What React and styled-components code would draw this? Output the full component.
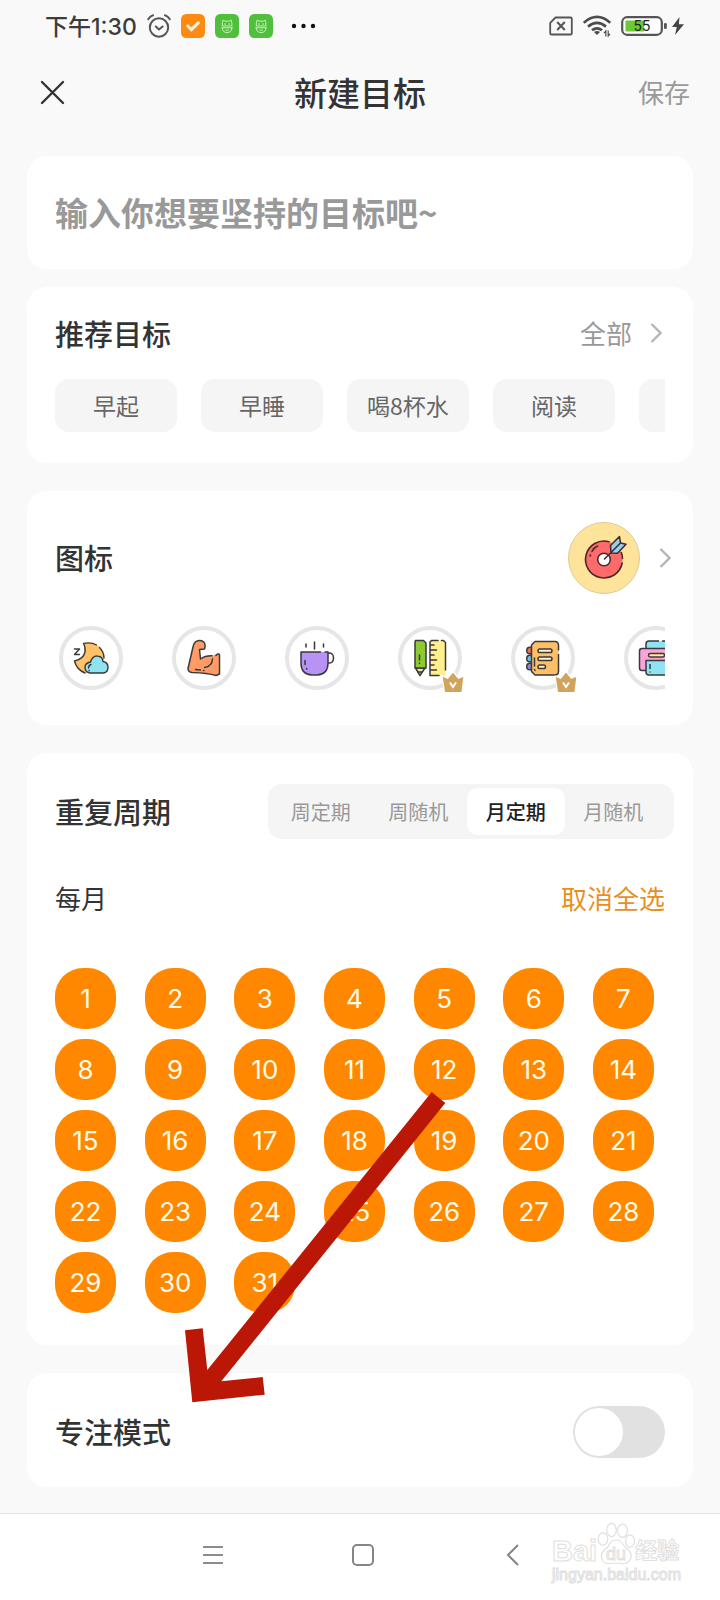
import React, { useState } from 'react'
import styled, { createGlobalStyle } from 'styled-components'

const GlobalStyle = createGlobalStyle`
  * {
    box-sizing: border-box;
  }

  body {
    margin: 0;
    background: #f9f9f9;
    color: #333;
    font-family: "Noto Sans CJK SC", "Noto Sans", sans-serif;
  }

  button, input {
    font-family: inherit;
    margin: 0;
  }

  button {
    padding: 0;
    border: 0;
    background: none;
    color: inherit;
    cursor: pointer;
  }

  svg {
    display: block;
    flex: none;
  }
`

const Page = styled.div`
  min-height: 100vh;
  display: flex;
  flex-direction: column;
`

const StatusBar = styled.div`
  height: 52px;
  padding: 0 36px 0 45px;
  display: flex;
  align-items: center;
  justify-content: space-between;
`

const StatusGroup = styled.div`
  display: flex;
  align-items: center;
  gap: ${(props) => props.$gap || 10}px;
`

const Clock = styled.span`
  font-size: 23px;
  line-height: 28px;
  font-weight: 500;
  color: #3c3c3c;
`

const ClockDigits = styled.span`
  font-family: Inter, sans-serif;
`

const Header = styled.header`
  height: 82px;
  padding: 0 30px 2px;
  display: grid;
  grid-template-columns: 1fr auto 1fr;
  align-items: center;
`

const CloseButton = styled.button`
  justify-self: start;
  padding: 10px;
`

const PageTitle = styled.h1`
  margin: 0;
  font-size: 33px;
  line-height: 48px;
  font-weight: 500;
`

const SaveButton = styled.button`
  justify-self: end;
  font-size: 26px;
  line-height: 40px;
  color: #999;
`

const Main = styled.main`
  flex: 1;
  padding: 22px 27px 26px;
  display: flex;
  flex-direction: column;
  gap: 28px;
`

const GoalGroup = styled.div`
  display: flex;
  flex-direction: column;
  gap: 18px;
`

const Card = styled.section`
  position: relative;
  padding: ${(props) => props.$pad || '31px 28px'};
  border-radius: 20px;
  background: #fff;
`

const GoalInput = styled.input`
  display: block;
  width: 100%;
  height: 113px;
  padding: 0 28px 2px;
  border: 0;
  border-radius: 20px;
  outline: 0;
  background: #fff;
  color: #333;
  font-size: 33px;
  font-weight: 700;

  &::placeholder {
    color: #999;
    opacity: 1;
  }
`

const Row = styled.div`
  height: ${(props) => props.$height}px;
  display: flex;
  align-items: center;
  justify-content: space-between;
`

const CardTitle = styled.h2`
  margin: 0;
  padding-bottom: 2px;
  font-size: 29px;
  line-height: 44px;
  font-weight: 500;
`

const MoreButton = styled.button`
  display: flex;
  align-items: center;
  gap: 18px;
  padding: 0 3px 2px 0;
  font-size: 26px;
  line-height: 40px;
  color: #999;
`

const Scroller = styled.div`
  display: flex;
  gap: ${(props) => props.$gap}px;
  overflow-x: auto;
  scrollbar-width: none;
`

const ChipList = styled(Scroller)`
  margin-top: 22px;
`

const IconList = styled(Scroller)`
  margin-top: 32px;
  padding: 0 0 4px 4px;
`

const Chip = styled.button`
  flex: none;
  width: 122px;
  height: 53px;
  padding-bottom: 2px;
  border-radius: 14px;
  background: #f5f5f5;
  color: #666;
  font-size: 23px;
`

const IconPicker = styled.button`
  display: flex;
  align-items: center;
  gap: 19px;
  margin-right: -6px;
`

const Selected = styled.span`
  width: 72px;
  height: 72px;
  border: 1px solid #dccb92;
  border-radius: 50%;
  background: #fee49a;
  display: grid;
  place-items: center;
`

const IconButton = styled.button`
  position: relative;
  flex: none;
  width: 64px;
  height: 64px;
  border: 4px solid #e6e6e6;
  border-radius: 50%;
  display: grid;
  place-items: center;
`

const Badge = styled.span`
  position: absolute;
  right: -7px;
  bottom: -8px;
`

const Segments = styled.div`
  width: 406px;
  height: 55px;
  margin-right: -9px;
  padding: 4px 12px 4px 4px;
  display: flex;
  border-radius: 14px;
  background: #f5f5f5;
`

const Segment = styled.button`
  flex: 1;
  border-radius: 11px;
  font-size: 20px;
  font-weight: ${(props) => (props.$active ? 500 : 400)};
  color: ${(props) => (props.$active ? '#222' : '#999')};
  background: ${(props) => (props.$active ? '#fff' : 'transparent')};
`

const MonthRow = styled(Row)`
  margin: 40px 0 49px;
  padding-bottom: 2px;
  font-size: 26px;
  line-height: 38px;
`

const ClearButton = styled.button`
  font-size: 26px;
  line-height: 38px;
  color: #e8901e;
`

const DayGrid = styled.div`
  padding-right: 11px;
  display: grid;
  grid-template-columns: repeat(7, 61px);
  justify-content: space-between;
  row-gap: 10px;
`

const Day = styled.button`
  height: 61px;
  border-radius: 28px;
  background: ${(props) => (props.$on ? '#ff8800' : '#f5f5f5')};
  color: ${(props) => (props.$on ? '#fffbe9' : '#666')};
  font-family: Inter, sans-serif;
  font-size: 26px;
`

const Arrow = styled.svg`
  position: absolute;
  left: 157px;
  top: 338px;
  z-index: 2;
  pointer-events: none;
`

const FocusLabel = styled.label`
  padding-bottom: 2px;
  font-size: 29px;
  line-height: 44px;
  font-weight: 500;
`

const Switch = styled.input`
  appearance: none;
  position: relative;
  width: 92px;
  height: 52px;
  border-radius: 26px;
  background: #e1e1e1;
  cursor: pointer;

  &::after {
    content: "";
    position: absolute;
    left: 2px;
    top: 2px;
    width: 48px;
    height: 48px;
    border-radius: 50%;
    background: #fff;
  }

  &:checked {
    background: #ff8800;
  }

  &:checked::after {
    left: 42px;
  }
`

const NavBar = styled.nav`
  position: relative;
  height: 87px;
  padding: 0 0 5px 6px;
  border-top: 1px solid #e3e3e3;
  background: #fff;
  display: flex;
  align-items: center;
  justify-content: center;
  gap: 128px;
`

const Watermark = styled.div`
  position: absolute;
  right: 38px;
  top: 7px;
  width: 130px;
  color: #fff;
  font-family: "Liberation Sans", "Noto Sans CJK SC", sans-serif;
  -webkit-text-stroke: 1px #e0e0e0;
`

const Brand = styled.div`
  display: flex;
  align-items: flex-end;
  height: 44px;
  font-size: 29px;
  line-height: 28px;
  font-weight: 700;
`

const BrandCn = styled.span`
  font-size: 22px;
`

const Site = styled.div`
  font-size: 16px;
  line-height: 20px;
`

const Chevron = () => (
  <svg width="12" height="20" viewBox="0 0 12 20" fill="none" stroke="#b5b5b5" strokeWidth="2.4">
    <path d="M1.500 1 10.500 10 1.500 19" />
  </svg>
)

const AlarmIcon = () => (
  <svg width="24" height="24" viewBox="0 0 24 24" fill="none" stroke="#555" strokeWidth="2" strokeLinecap="round">
    <circle cx="12" cy="13.5" r="9.2" />
    <path d="M8.8 12.5 12 15.5l3.6-3M1.2 5.2Q3 2.4 6 1.3M22.8 5.2Q21 2.4 18 1.3" />
  </svg>
)

const CheckApp = () => (
  <svg width="24" height="24" viewBox="0 0 23 23">
    <rect width="23" height="23" rx="5" fill="#ff8a12" />
    <path d="m6.500 11.500 3.500 3.500 6.500-6.500" fill="none" stroke="#fff3d8" strokeWidth="3" strokeLinecap="round" />
  </svg>
)

const RobotApp = () => (
  <svg width="24" height="24" viewBox="0 0 23 23">
    <rect width="23" height="23" rx="5" fill="#50c03c" />
    <g fill="none" stroke="#dcf8d2" strokeWidth="0.8" strokeLinejoin="round">
      <path d="M7 11.500V8.600L7.800 5.800l1.800 1.100h4l1.800-1.100.8 2.800v2.900z" />
      <path d="M6 13.200h11.200M7 13.200q.2 4.600 4.600 4.600t4.600-4.600M10.200 15.500h2.800" />
    </g>
    <path d="M8.800 9h1.500v1.100H8.800zM12.900 9h1.500v1.100h-1.500z" fill="#dcf8d2" />
  </svg>
)

const MoreDots = () => (
  <svg width="34" height="6" viewBox="0 0 34 6" fill="#111">
    <circle cx="11" cy="3" r="2.200" />
    <circle cx="20.500" cy="3" r="2.200" />
    <circle cx="30" cy="3" r="2.200" />
  </svg>
)

const SimIcon = () => (
  <svg width="24" height="20" viewBox="0 0 24 20" fill="none" stroke="#555" strokeWidth="1.800">
    <path d="M6.500 1.500H21.500a1.300 1.300 0 0 1 1.300 1.300v14.400a1.300 1.300 0 0 1-1.300 1.300H2.500a1.300 1.300 0 0 1-1.300-1.300V6.800z" strokeLinejoin="round" />
    <path d="m8.200 6 7.600 8M15.800 6l-7.600 8" strokeWidth="2" />
  </svg>
)

const WifiIcon = () => (
  <svg width="28" height="22" viewBox="0 0 28 22" fill="none" stroke="#4c4c4c" strokeWidth="2.700">
    <path d="M.8 7.800Q14-4 27.200 7.800M5 11.600q9-7.600 18 0M9 15.300q5-4 10 0" />
    <path d="m14 20-3-3q3-2.200 6 0z" fill="#4c4c4c" stroke="none" />
    <path d="M22.800 21.500v-5.500l-1.800 2.200M25.200 15.500v5.500l1.800-2.200" strokeWidth="1.200" />
  </svg>
)

const BatteryIcon = () => (
  <svg width="47" height="20" viewBox="0 0 47 20">
    <rect x="1.200" y="1.200" width="39.600" height="17.600" rx="5" fill="#fff" stroke="#555" strokeWidth="2.200" />
    <path d="M5.500 4.500H23v11H5.500a1 1 0 0 1-1-1v-9a1 1 0 0 1 1-1z" fill="#6bc934" />
    <rect x="43" y="7" width="2.800" height="6" rx="1.200" fill="#555" />
    <text x="21" y="15.200" textAnchor="middle" fontFamily="Inter, sans-serif" fontSize="14" fill="#222">55</text>
  </svg>
)

const BoltIcon = () => (
  <svg width="12" height="20" viewBox="0 0 12 20" fill="#444">
    <path d="M7.500 1 0 11h4.800L3 19 12 8.200H6.800z" />
  </svg>
)

const CloseIcon = () => (
  <svg width="25" height="25" viewBox="0 0 25 25" fill="none" stroke="#333" strokeWidth="2.400" strokeLinecap="round">
    <path d="m2 2 21 21M23 2 2 23" />
  </svg>
)

const TargetIcon = () => (
  <svg width="48" height="48" viewBox="0 0 48 48" fill="none" stroke="#4a2a2a" strokeWidth="1.600" strokeLinejoin="round" strokeLinecap="round">
    <circle cx="24" cy="25.500" r="18.500" fill="#ff6a6a" stroke="none" />
    <path d="M29 7.700A18.500 18.500 0 1 0 42.200 29M41.300 18.500Q42.500 21.500 42.500 24.500" />
    <path d="M10.500 21l-.3 1M12 17.500q2-4 5.500-5.500" />
    <circle cx="24" cy="25.500" r="6.300" fill="#fff" />
    <path d="m24.500 25 7.500-7.500" />
    <path d="m31 19-.5-7.500 9-9 1 6.500 5.500 1.200-8.500 9z" fill="#93d2ee" />
    <path d="M31 18.500 40.500 9" />
  </svg>
)

const MoonIcon = () => (
  <svg width="36" height="34" viewBox="0 0 36 34" fill="none" stroke="#3a3a3a" strokeWidth="1.400" strokeLinejoin="round" strokeLinecap="round">
    <path d="M12 32Q3.500 28.500 1.500 20q9-2 10.500-9 .7-5-1.500-8.500Q20 0 26.500 6q4.500 5 4.500 13L17 32z" fill="#ffc267" stroke="none" />
    <path d="M12 32Q3.500 28.500 1.500 20q9-2 10.500-9 .7-5-1.500-8.500Q18 .8 23.500 4M26.500 6.500Q31 11 31 17" />
    <path d="M17 32q-5-1-5-5.500t5.500-5.500q2-6.500 7-6 5 .3 5.500 5.500 5 .8 5 5.800T30.500 32z" fill="#8fe3f2" />
    <path d="M15.500 27q.3-3 2.500-3.500M16 29.500l.2.200" />
    <path d="M1.500 8h5l-5 5.500h5" />
  </svg>
)

const ArmIcon = () => (
  <svg width="36" height="38" viewBox="0 0 36 38" fill="none" stroke="#3a3a3a" strokeWidth="1.500" strokeLinejoin="round" strokeLinecap="round">
    <path d="M2 30 7 8Q8 2 12.500 1.500q6-.2 6.500 3.500l-.5 5-5 .5 1 9.500q5-4 13-3.500 3-2.500 6-2V35l-3 1.500q-8-2.500-24-3-4-.5-4-3.500z" fill="#ff9b66" stroke="none" />
    <path d="M26 16.700q-7-.2-11.500 3.300l-1-9.500 5-.5Q20 5 17.500 2.800 15 1 12 1.700 8 2.500 7 8L2 29.500Q2 33 6 33.500q16 .5 24 3l3.500-1.500V16Q32.500 13.500 30 16.500M26.500 20q-.5 7.500-8 8.500M9.500 30.500l5 .5M17.500 31.500h.5" />
  </svg>
)

const CupIcon = () => (
  <svg width="36" height="36" viewBox="0 0 36 36" fill="none" stroke="#3a3a3a" strokeWidth="1.500" strokeLinejoin="round" strokeLinecap="round">
    <path d="M2 12h27v11q0 11.500-11 12h-5Q2 34 2 23z" fill="#b992f5" stroke="none" />
    <path d="M21.500 12H2v11q0 11.500 11 12h5q11-.5 11-12V12h-3M29 13q5.500-.5 5.500 5t-5.500 5M15.500 2v7M7 4v3M24.500 4v3M6 20.500v4M7.500 28.500l.4.500" />
  </svg>
)

const PencilIcon = () => (
  <svg width="34" height="38" viewBox="0 0 34 38" fill="none" stroke="#3a3a3a" strokeWidth="1.500" strokeLinejoin="round" strokeLinecap="round">
    <path d="m2.500 29 4.500 7.500L12 29z" fill="#fbe0a5" />
    <path d="M2.500 1.500h8L13 4v25H2V3z" fill="#8fc932" />
    <path d="M6.500 16v5M6.500 24v.5M5 33h4" />
    <path d="M17 1.500h13L32.500 4v32.500H17z" fill="#fff08d" stroke="none" />
    <path d="M25 1.500H18.500L17 3v33.500h9M28.500 1.500h2l2 2V31M17 6h4M17 11h6.500M17 16h4M17 21h6.500M17 26h4M17 31h6.500" />
  </svg>
)

const BookIcon = () => (
  <svg width="36" height="37" viewBox="0 0 36 37" fill="none" stroke="#3a3a3a" strokeWidth="1.500" strokeLinejoin="round" strokeLinecap="round">
    <circle cx="5" cy="10.500" r="3.300" fill="#ee6b60" />
    <circle cx="5" cy="18.500" r="3.300" fill="#6ac4e6" />
    <circle cx="5" cy="26.500" r="3.300" fill="#8e86db" />
    <path d="M10 1.500h20q3.500 0 3.500 4v26q0 3.500-4 3.500H10L6.500 31.500V5z" fill="#ffbf66" stroke="none" />
    <path d="M33.500 10V5.500q0-4-3.500-4H10L6.500 5v26.500l3.500 3.500h19.500q4 0 4-3.500V14.500M9.500 18v8M9.500 29.500l.5 1" />
    <rect x="13" y="9" width="14" height="3.600" rx="1.800" fill="#fff3d4" />
    <rect x="13" y="17" width="14" height="3.600" rx="1.800" fill="#fff3d4" />
    <rect x="13" y="25" width="7.500" height="3.600" rx="1.800" fill="#fff3d4" />
  </svg>
)

const PrinterIcon = () => (
  <svg width="36" height="38" viewBox="0 0 36 38" fill="none" stroke="#3a3a3a" strokeWidth="1.500" strokeLinejoin="round">
    <path d="M8 10V5q0-3 3-3h15q3 0 3 3v5z" fill="#8fe3f2" stroke="none" />
    <path d="M8 10V5q0-3 3-3h10M24 2h2q3 0 3 3v5" />
    <rect x="1.500" y="9.500" width="33" height="22" rx="2.500" fill="#f9a5dc" />
    <rect x="10.500" y="14.500" width="16" height="3.500" rx="1.700" fill="#fff08d" />
    <path d="M8 21.500h21V36H11q-3 0-3-3z" fill="#8fe3f2" />
    <path d="M12 25v5M12 32.500v1" />
  </svg>
)

const CrownIcon = () => (
  <svg width="24" height="24" viewBox="0 0 24 24">
    <path d="m1 6 5.500 2.300L12 1.500l5.500 6.800L23 6l-2 16.500H3.500z" fill="#d1a45c" stroke="#fff" strokeWidth="1.200" strokeLinejoin="round" />
    <path d="m9 12.500 3 4.500 3-4.500" fill="none" stroke="#fff" strokeWidth="2" />
  </svg>
)

const PawIcon = () => (
  <svg width="38" height="43" viewBox="0 0 38 43" fill="#fff" stroke="#e0e0e0" strokeWidth="1.200">
    <ellipse cx="6" cy="17" rx="4.800" ry="6.200" />
    <ellipse cx="14.500" cy="8" rx="4.800" ry="6.600" />
    <ellipse cx="25.500" cy="8.800" rx="5" ry="6.600" />
    <ellipse cx="33" cy="19" rx="4.500" ry="6.200" />
    <path d="M19 18q4.500 0 7 4.500 2 3 5.500 5.500 4 4 2 9-2.500 5-8.500 4.500-6-1-12 0-7.500.5-8.500-6-.5-5 3.500-8 3-2 4.500-5.500 2-4 6.500-4z" />
    <text x="19" y="38" textAnchor="middle" fontFamily="Liberation Sans, sans-serif" fontSize="18" fontWeight="400" strokeWidth="1">du</text>
  </svg>
)

const chips = ['早起', '早睡', '喝8杯水', '阅读']

const icons = [
  { name: '睡眠', Icon: MoonIcon },
  { name: '健身', Icon: ArmIcon },
  { name: '喝水', Icon: CupIcon },
  { name: '学习', Icon: PencilIcon, vip: true },
  { name: '记事', Icon: BookIcon, vip: true },
  { name: '打印', Icon: PrinterIcon },
]

const cycles = ['周定期', '周随机', '月定期', '月随机']

const monthDays = Array.from({ length: 31 }, (_, i) => i + 1)

export default function App() {
  const [cycle, setCycle] = useState('月定期')
  const [days, setDays] = useState(monthDays)

  const toggleDay = (day) => {
    setDays(days.includes(day) ? days.filter((d) => d !== day) : [...days, day])
  }

  return (
    <Page>
      <GlobalStyle />

      <StatusBar>
        <StatusGroup>
          <Clock>下午<ClockDigits>1:30</ClockDigits></Clock>
          <AlarmIcon />
          <CheckApp />
          <RobotApp />
          <RobotApp />
          <MoreDots />
        </StatusGroup>
        <StatusGroup>
          <SimIcon />
          <WifiIcon />
          <StatusGroup $gap={4}>
            <BatteryIcon />
            <BoltIcon />
          </StatusGroup>
        </StatusGroup>
      </StatusBar>

      <Header>
        <CloseButton type="button" aria-label="关闭"><CloseIcon /></CloseButton>
        <PageTitle>新建目标</PageTitle>
        <SaveButton type="button">保存</SaveButton>
      </Header>

      <Main>
        <GoalGroup>
          <GoalInput type="text" aria-label="目标" placeholder="输入你想要坚持的目标吧~" />

          <Card $pad="24px 28px 31px">
            <Row $height={46}>
              <CardTitle>推荐目标</CardTitle>
              <MoreButton type="button">全部 <Chevron /></MoreButton>
            </Row>
            <ChipList $gap={24}>
              {chips.map((chip) => (
                <Chip type="button" key={chip}>{chip}</Chip>
              ))}
              <Chip type="button" aria-label="更多" />
            </ChipList>
          </Card>
        </GoalGroup>

        <Card>
          <Row $height={72}>
            <CardTitle>图标</CardTitle>
            <IconPicker type="button" aria-label="选择图标">
              <Selected><TargetIcon /></Selected>
              <Chevron />
            </IconPicker>
          </Row>
          <IconList $gap={49}>
            {icons.map(({ name, Icon, vip }) => (
              <IconButton type="button" key={name} aria-label={name}>
                <Icon />
                {vip && <Badge><CrownIcon /></Badge>}
              </IconButton>
            ))}
          </IconList>
        </Card>

        <Card $pad="31px 28px 32px">
          <Row $height={55}>
            <CardTitle>重复周期</CardTitle>
            <Segments>
              {cycles.map((name) => (
                <Segment
                  type="button"
                  key={name}
                  $active={name === cycle}
                  aria-pressed={name === cycle}
                  onClick={() => setCycle(name)}
                >
                  {name}
                </Segment>
              ))}
            </Segments>
          </Row>
          <MonthRow $height={40}>
            <span>每月</span>
            <ClearButton type="button" onClick={() => setDays([])}>取消全选</ClearButton>
          </MonthRow>
          <DayGrid>
            {monthDays.map((day) => (
              <Day
                type="button"
                key={day}
                $on={days.includes(day)}
                aria-pressed={days.includes(day)}
                onClick={() => toggleDay(day)}
              >
                {day}
              </Day>
            ))}
          </DayGrid>
          <Arrow width="263" height="313" viewBox="0 0 263 313" fill="#bb1707">
            <path d="M247.700 1 261.300 12 37.300 290.300 78.700 286 80.700 303.700 8.300 311.300 1 239.300 18.700 237.300 23.300 279z" />
          </Arrow>
        </Card>

        <Card $pad="33px 28px 29px">
          <Row $height={52}>
            <FocusLabel htmlFor="focus-mode">专注模式</FocusLabel>
            <Switch type="checkbox" role="switch" id="focus-mode" />
          </Row>
        </Card>
      </Main>

      <NavBar>
        <button type="button" aria-label="菜单">
          <svg width="22" height="22" viewBox="0 0 22 22" fill="none" stroke="#8c8c8c" strokeWidth="1.800">
            <path d="M1 3h20M1 11h20M1 19h20" />
          </svg>
        </button>
        <button type="button" aria-label="主页">
          <svg width="22" height="22" viewBox="0 0 22 22" fill="none" stroke="#858585" strokeWidth="2">
            <rect x="1" y="1" width="20" height="20" rx="4" />
          </svg>
        </button>
        <button type="button" aria-label="返回">
          <svg width="22" height="22" viewBox="0 0 22 22" fill="none" stroke="#858585" strokeWidth="2">
            <path d="M16 1 6 11l10 10" />
          </svg>
        </button>
        <Watermark>
          <Brand>Bai<PawIcon /><BrandCn>经验</BrandCn></Brand>
          <Site>jingyan.baidu.com</Site>
        </Watermark>
      </NavBar>
    </Page>
  )
}
